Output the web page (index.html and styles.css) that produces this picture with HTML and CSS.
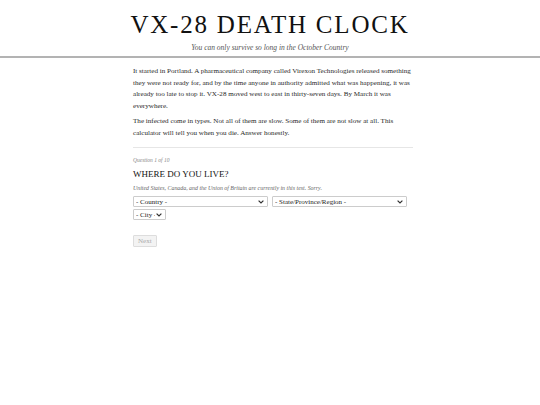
FILE: index.html
```html
<!DOCTYPE html>
<html lang="en">
<head>
<meta charset="UTF-8">
<meta name="viewport" content="width=device-width, initial-scale=1">
<title>VX-28 Death Clock</title>
<link rel="stylesheet" href="styles.css">
</head>
<body>

<header class="masthead">
  <h1>VX-28 DEATH CLOCK</h1>
  <p class="tagline">You can only survive so long in the October Country</p>
</header>

<main class="page">
  <!-- Intro -->
  <section class="intro">
    <p>It started in Portland. A pharmaceutical company called Virexon Technologies released something they were not ready for, and by the time anyone in authority admitted what was happening, it was already too late to stop it. VX-28 moved west to east in thirty-seven days. By March it was everywhere.</p>
    <p>The infected come in types. Not all of them are slow. Some of them are not slow at all. This calculator will tell you when you die. Answer honestly.</p>
  </section>

  <!-- Question -->
  <section class="question">
    <p class="count">Question 1 of 10</p>
    <h2>WHERE DO YOU LIVE?</h2>
    <p class="note">United States, Canada, and the Union of Britain are currently in this test. Sorry.</p>
    <div class="selects">
      <select class="wide"><option>- Country -</option></select>
      <select class="wide"><option>- State/Province/Region -</option></select>
      <select class="city"><option>- City -</option></select>
    </div>
    <button class="next" disabled>Next</button>
  </section>
</main>

</body>
</html>
```
FILE: styles.css
```css
body{margin:0;background:#fff;color:#222;font-family:"Liberation Serif","Times New Roman",serif;}
.masthead{text-align:center;border-bottom:2px solid #b3b3b3;padding:11px 0 4px;}
.masthead h1{margin:0;font-weight:normal;font-size:25px;letter-spacing:1.8px;line-height:28px;color:#111;}
.tagline{margin:4px 0 0;font-style:italic;font-size:7.5px;color:#555;}
.page{width:280px;margin:0 auto;padding-left:6px;}
.intro{padding:8px 0 4px;border-bottom:1px solid #e6e6e6;}
.intro p{margin:0 0 4px;font-size:7.1px;line-height:11.7px;color:#2a2a2a;}
.intro p + p{margin-top:-1px;}
.question{padding-top:9px;}
.count{margin:0;font-style:italic;font-size:5.5px;color:#888;}
.question h2{margin:6px 0 6px;font-weight:normal;font-size:9px;color:#111;}
.note{margin:0 0 5px;font-style:italic;font-size:5.9px;color:#666;}
.selects{display:flex;flex-wrap:wrap;gap:2px 4px;width:276px;}
select{appearance:none;-webkit-appearance:none;font-family:inherit;font-size:7px;height:11px;padding:0 10px 0 2px;border:1px solid #ccc;border-radius:1px;color:#222;
  background:#fff url("data:image/svg+xml,%3Csvg xmlns='http://www.w3.org/2000/svg' width='6' height='4' viewBox='0 0 6 4'%3E%3Cpath d='M0.6 0.6 L3 3 L5.4 0.6' fill='none' stroke='%23333' stroke-width='1.2'/%3E%3C/svg%3E") no-repeat right 3px center;}
select.wide{width:135px;}
select.city{width:33px;}
.next{margin-top:15px;font-family:inherit;font-size:7px;padding:0 4px;height:12px;border:1px solid #ddd;background:#f3f3f3;color:#aaa;border-radius:1px;}
```
